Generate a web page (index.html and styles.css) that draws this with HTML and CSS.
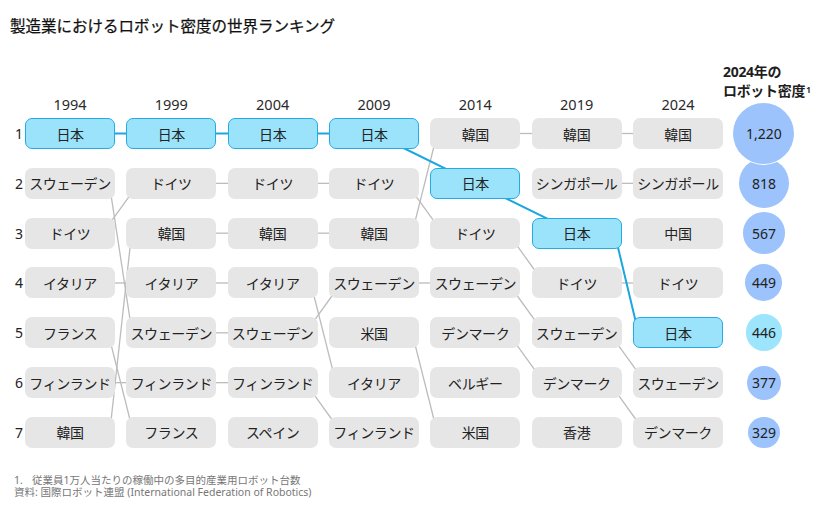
FILE: index.html
```
<!DOCTYPE html>
<html lang="ja">
<head>
<meta charset="utf-8">
<title>製造業におけるロボット密度の世界ランキング</title>
<link rel="stylesheet" href="styles.css">
</head>
<body>
<div class="page">
  <svg class="links" width="820" height="519" viewBox="0 0 820 519" aria-hidden="true">
    <g class="gray">
      <line x1="112" y1="283" x2="129.33" y2="283"/>
      <line x1="112" y1="382.67" x2="129.33" y2="382.67"/>
      <line x1="111" y1="194.83" x2="130.33" y2="321.33"/>
      <line x1="111" y1="221.67" x2="130.33" y2="194.83"/>
      <line x1="111" y1="344.33" x2="130.33" y2="421"/>
      <line x1="111" y1="421" x2="130.33" y2="244.67"/>

      <line x1="213.33" y1="183.33" x2="230.67" y2="183.33"/>
      <line x1="213.33" y1="233.17" x2="230.67" y2="233.17"/>
      <line x1="213.33" y1="283" x2="230.67" y2="283"/>
      <line x1="213.33" y1="332.83" x2="230.67" y2="332.83"/>
      <line x1="213.33" y1="382.67" x2="230.67" y2="382.67"/>

      <line x1="314.67" y1="183.33" x2="332" y2="183.33"/>
      <line x1="314.67" y1="233.17" x2="332" y2="233.17"/>
      <line x1="313.67" y1="294.5" x2="333" y2="371.17"/>
      <line x1="313.67" y1="321.33" x2="333" y2="294.5"/>
      <line x1="313.67" y1="394.17" x2="333" y2="421"/>

      <line x1="416" y1="283" x2="433.33" y2="283"/>
      <line x1="415" y1="194.83" x2="434.33" y2="221.67"/>
      <line x1="415" y1="221.67" x2="434.33" y2="145"/>
      <line x1="415" y1="344.33" x2="434.33" y2="421"/>

      <line x1="517.33" y1="133.5" x2="534.67" y2="133.5"/>
      <line x1="516.33" y1="244.67" x2="535.67" y2="271.5"/>
      <line x1="516.33" y1="294.5" x2="535.67" y2="321.33"/>
      <line x1="516.33" y1="344.33" x2="535.67" y2="371.17"/>

      <line x1="618.67" y1="133.5" x2="636" y2="133.5"/>
      <line x1="618.67" y1="183.33" x2="636" y2="183.33"/>
      <line x1="618.67" y1="283" x2="636" y2="283"/>
      <line x1="617.67" y1="344.33" x2="637" y2="371.17"/>
      <line x1="617.67" y1="394.17" x2="637" y2="421"/>
    </g>
    <g class="blue">
      <line x1="112" y1="133.5" x2="129.33" y2="133.5"/>
      <line x1="213.33" y1="133.5" x2="230.67" y2="133.5"/>
      <line x1="314.67" y1="133.5" x2="332" y2="133.5"/>
      <line x1="374" y1="133.5" x2="475.33" y2="183.33"/>
      <line x1="475.33" y1="183.33" x2="576.67" y2="233.17"/>
      <line x1="614.6" y1="233.17" x2="638.4" y2="332.83"/>
    </g>
  </svg>

  <h1 class="title">製造業におけるロボット密度の世界ランキング</h1>

  <div class="head">
    <div class="rank"></div>
    <div class="cells">
      <div class="year">1994</div>
      <div class="year">1999</div>
      <div class="year">2004</div>
      <div class="year">2009</div>
      <div class="year">2014</div>
      <div class="year">2019</div>
      <div class="year">2024</div>
    </div>
    <div class="dens-head">2024年の<br>ロボット密度<sup>1</sup></div>
  </div>

  <div class="rows">
    <div class="row">
      <div class="rank">1</div>
      <div class="cells">
        <div class="box hl">日本</div>
        <div class="box hl">日本</div>
        <div class="box hl">日本</div>
        <div class="box hl">日本</div>
        <div class="box">韓国</div>
        <div class="box">韓国</div>
        <div class="box">韓国</div>
      </div>
      <div class="dens"><div class="circle front" style="width:61px;height:61px">1,220</div></div>
    </div>
    <div class="row">
      <div class="rank">2</div>
      <div class="cells">
        <div class="box">スウェーデン</div>
        <div class="box">ドイツ</div>
        <div class="box">ドイツ</div>
        <div class="box">ドイツ</div>
        <div class="box hl">日本</div>
        <div class="box">シンガポール</div>
        <div class="box">シンガポール</div>
      </div>
      <div class="dens"><div class="circle" style="width:50px;height:50px">818</div></div>
    </div>
    <div class="row">
      <div class="rank">3</div>
      <div class="cells">
        <div class="box">ドイツ</div>
        <div class="box">韓国</div>
        <div class="box">韓国</div>
        <div class="box">韓国</div>
        <div class="box">ドイツ</div>
        <div class="box hl">日本</div>
        <div class="box">中国</div>
      </div>
      <div class="dens"><div class="circle" style="width:41.6px;height:41.6px">567</div></div>
    </div>
    <div class="row">
      <div class="rank">4</div>
      <div class="cells">
        <div class="box">イタリア</div>
        <div class="box">イタリア</div>
        <div class="box">イタリア</div>
        <div class="box">スウェーデン</div>
        <div class="box">スウェーデン</div>
        <div class="box">ドイツ</div>
        <div class="box">ドイツ</div>
      </div>
      <div class="dens"><div class="circle" style="width:37px;height:37px">449</div></div>
    </div>
    <div class="row">
      <div class="rank">5</div>
      <div class="cells">
        <div class="box">フランス</div>
        <div class="box">スウェーデン</div>
        <div class="box">スウェーデン</div>
        <div class="box">米国</div>
        <div class="box">デンマーク</div>
        <div class="box">スウェーデン</div>
        <div class="box hl">日本</div>
      </div>
      <div class="dens"><div class="circle jp" style="width:36.9px;height:36.9px">446</div></div>
    </div>
    <div class="row">
      <div class="rank">6</div>
      <div class="cells">
        <div class="box">フィンランド</div>
        <div class="box">フィンランド</div>
        <div class="box">フィンランド</div>
        <div class="box">イタリア</div>
        <div class="box">ベルギー</div>
        <div class="box">デンマーク</div>
        <div class="box">スウェーデン</div>
      </div>
      <div class="dens"><div class="circle" style="width:33.9px;height:33.9px">377</div></div>
    </div>
    <div class="row">
      <div class="rank">7</div>
      <div class="cells">
        <div class="box">韓国</div>
        <div class="box">フランス</div>
        <div class="box">スペイン</div>
        <div class="box">フィンランド</div>
        <div class="box">米国</div>
        <div class="box">香港</div>
        <div class="box">デンマーク</div>
      </div>
      <div class="dens"><div class="circle" style="width:31.7px;height:31.7px">329</div></div>
    </div>
  </div>

  <div class="notes">
    <p><span class="num">1.</span>従業員1万人当たりの稼働中の多目的産業用ロボット台数</p>
    <p>資料: 国際ロボット連盟 (International Federation of Robotics)</p>
  </div>
</div>
</body>
</html>
```

FILE: styles.css
```
* { box-sizing: border-box; }

html, body {
  margin: 0;
  padding: 0;
  background: #ffffff;
}

body {
  font-family: "Noto Sans", "Noto Sans CJK JP", sans-serif;
  color: #222222;
}

.page {
  position: relative;
  width: 820px;
  height: 519px;
  overflow: hidden;
}

.links {
  position: absolute;
  left: 0;
  top: 0;
  z-index: 0;
}

.links .gray line {
  stroke: #bcbcbc;
  stroke-width: 1.3;
}

.links .blue line {
  stroke: #1ba6e0;
  stroke-width: 2;
}

.title {
  position: relative;
  z-index: 1;
  margin: 0;
  padding: 15px 0 0 10px;
  font-size: 15.5px;
  line-height: 20px;
  font-weight: 400;
  color: #111111;
  font-family: "Noto Sans CJK JP", sans-serif;
  -webkit-text-stroke: 0.25px #111111;
}

.head {
  position: relative;
  z-index: 1;
  display: flex;
  align-items: flex-end;
  margin-top: 26.5px;
}

.rank {
  width: 25px;
  flex: 0 0 25px;
  text-align: right;
  padding-right: 2px;
  font-size: 14px;
  color: #222;
}

.cells {
  display: flex;
  gap: 11.333px;
}

.year {
  width: 90px;
  text-align: center;
  font-size: 14.5px;
  line-height: 18px;
  color: #2a2a2a;
}

.dens-head {
  margin-bottom: 13.5px;
  font-size: 14px;
  line-height: 19px;
  font-weight: 700;
  letter-spacing: -0.3px;
  color: #1e1e1e;
  white-space: nowrap;
}

.dens-head sup {
  font-size: 8px;
  vertical-align: top;
  position: relative;
  top: -1px;
  margin-left: 1px;
}

.rows {
  position: relative;
  z-index: 1;
  display: flex;
  flex-direction: column;
  gap: 18.833px;
  margin-top: 5px;
}

.row {
  display: flex;
  align-items: center;
  height: 31px;
}

.box {
  width: 90px;
  height: 31px;
  display: flex;
  align-items: center;
  justify-content: center;
  background: #e6e6e6;
  border-radius: 7px;
  font-family: "Noto Sans CJK JP", sans-serif;
  font-size: 14px;
  letter-spacing: -0.4px;
  white-space: nowrap;
  color: #222;
}

.box.hl {
  background: #9ae3fa;
  border: 1px solid #25abe3;
}

.dens {
  width: 82px;
  height: 31px;
  display: flex;
  align-items: center;
  justify-content: center;
}

.circle {
  position: relative;
  z-index: 1;
  flex: 0 0 auto;
  display: flex;
  align-items: center;
  justify-content: center;
  border-radius: 50%;
  background: #9cc3fb;
  box-shadow: 0 0 0 1px #ffffff;
  font-size: 14px;
  color: #222;
}

.circle.front { z-index: 2; }

.circle.jp { background: #9ce5fc; }

.notes {
  position: relative;
  z-index: 1;
  margin-top: 26px;
  padding-left: 14px;
  font-size: 10.5px;
  line-height: 12.5px;
  color: #777777;
}

.notes p { margin: 0; }

.notes .num {
  display: inline-block;
  width: 18px;
}
```
